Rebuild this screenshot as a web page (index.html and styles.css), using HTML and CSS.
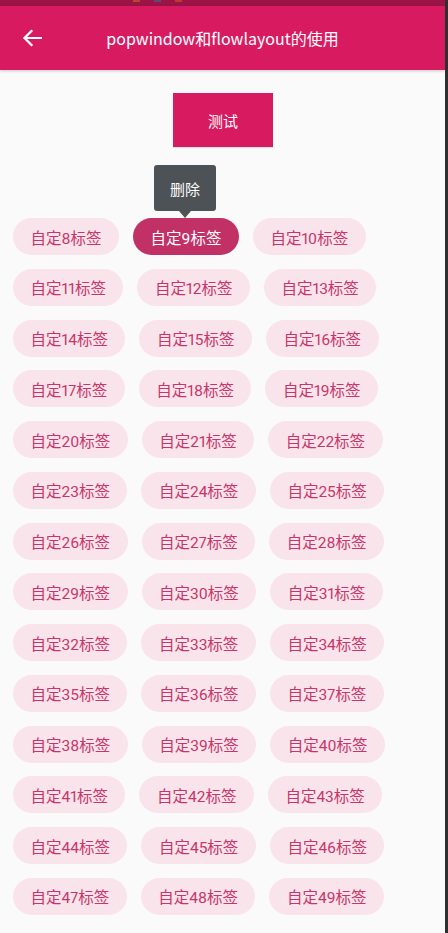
FILE: index.html
```html
<!DOCTYPE html>
<html>
<head>
<meta charset="utf-8">
<link rel="stylesheet" href="styles.css">
</head>
<body>
<div class="screen">
  <div class="main">
    <div class="status">
      <span class="dot d1"></span><span class="dot d2"></span><span class="dot d3"></span>
    </div>
    <div class="appbar">
      <svg class="back" width="20" height="18" viewBox="0 0 20 18"><path d="M19 9H2.5M9.5 2L2.5 9l7 7" fill="none" stroke="#fff" stroke-width="2.2" stroke-linecap="square"/></svg>
      <div class="title">popwindow和flowlayout的使用</div>
    </div>
    <div class="content">
      <div class="btnrow"><div class="btn">测试</div></div>
      <div class="flow">
        <div class="chip">自定8标签</div>
        <div class="chip sel">自定9标签<div class="tip">删除</div></div>
        <div class="chip">自定10标签</div>
        <div class="chip">自定11标签</div>
        <div class="chip">自定12标签</div>
        <div class="chip">自定13标签</div>
        <div class="chip">自定14标签</div>
        <div class="chip">自定15标签</div>
        <div class="chip">自定16标签</div>
        <div class="chip">自定17标签</div>
        <div class="chip">自定18标签</div>
        <div class="chip">自定19标签</div>
        <div class="chip">自定20标签</div>
        <div class="chip">自定21标签</div>
        <div class="chip">自定22标签</div>
        <div class="chip">自定23标签</div>
        <div class="chip">自定24标签</div>
        <div class="chip">自定25标签</div>
        <div class="chip">自定26标签</div>
        <div class="chip">自定27标签</div>
        <div class="chip">自定28标签</div>
        <div class="chip">自定29标签</div>
        <div class="chip">自定30标签</div>
        <div class="chip">自定31标签</div>
        <div class="chip">自定32标签</div>
        <div class="chip">自定33标签</div>
        <div class="chip">自定34标签</div>
        <div class="chip">自定35标签</div>
        <div class="chip">自定36标签</div>
        <div class="chip">自定37标签</div>
        <div class="chip">自定38标签</div>
        <div class="chip">自定39标签</div>
        <div class="chip">自定40标签</div>
        <div class="chip">自定41标签</div>
        <div class="chip">自定42标签</div>
        <div class="chip">自定43标签</div>
        <div class="chip">自定44标签</div>
        <div class="chip">自定45标签</div>
        <div class="chip">自定46标签</div>
        <div class="chip">自定47标签</div>
        <div class="chip">自定48标签</div>
        <div class="chip">自定49标签</div>
      </div>
    </div>
  </div>
  <div class="edge"></div>
</div>
</body>
</html>
```
FILE: styles.css
```css
html, body {
  margin: 0;
  padding: 0;
  height: 100%;
  overflow: hidden;
}
body {
  font-family: Roboto, "Noto Sans CJK SC", sans-serif;
  background: #fafafa;
}
.screen {
  display: flex;
  width: 448px;
  height: 933px;
}
.main {
  width: 445px;
  height: 933px;
  background: #fafafa;
  overflow: hidden;
}
.edge {
  width: 3px;
  background: #2f2f2f;
}
.status {
  height: 6px;
  background: #9c1446;
  position: relative;
}
.dot {
  position: absolute;
  top: 0;
  height: 2px;
  width: 7px;
}
.d1 { left: 133px; background: #b4492e; }
.d2 { left: 154px; background: #5a4a78; }
.d3 { left: 175px; background: #c2382e; }
.appbar {
  height: 64px;
  background: #d81b60;
  display: flex;
  align-items: center;
  position: relative;
  box-shadow: 0 1px 3px rgba(0,0,0,0.2);
}
.back {
  margin-left: 22px;
}
.title {
  position: absolute;
  left: 0;
  right: 0;
  text-align: center;
  color: #fff;
  font-family: "Noto Sans CJK SC", sans-serif;
  font-size: 16px;
  pointer-events: none;
}
.content {
  padding-top: 23px;
}
.btnrow {
  display: flex;
  justify-content: center;
}
.btn {
  width: 100px;
  height: 54px;
  background: #d81b60;
  color: #fff;
  font-size: 15px;
  display: flex;
  align-items: center;
  justify-content: center;
  margin-left: 1px;
  box-shadow: 0 1px 1px rgba(0,0,0,0.1);
}
.flow {
  display: flex;
  flex-wrap: wrap;
  column-gap: 14px;
  row-gap: 13.77px;
  padding: 71px 10px 0 13px;
}
.chip {
  height: 37px;
  border-radius: 18.5px;
  background: #f9e4eb;
  color: #c8356a;
  font-size: 15.5px;
  font-variant-numeric: proportional-nums;
  padding: 0 17.5px;
  display: flex;
  align-items: center;
  position: relative;
}
.chip.sel {
  background: #c13166;
  color: #fff;
}
.tip {
  position: absolute;
  left: 21px;
  top: -53px;
  width: 62px;
  height: 46px;
  background: #4c5256;
  color: #fff;
  border-radius: 3px;
  font-size: 15px;
  display: flex;
  align-items: center;
  justify-content: center;
}
.tip::after {
  content: "";
  position: absolute;
  left: 25px;
  bottom: -7px;
  border-left: 6px solid transparent;
  border-right: 6px solid transparent;
  border-top: 7px solid #4c5256;
}
```
